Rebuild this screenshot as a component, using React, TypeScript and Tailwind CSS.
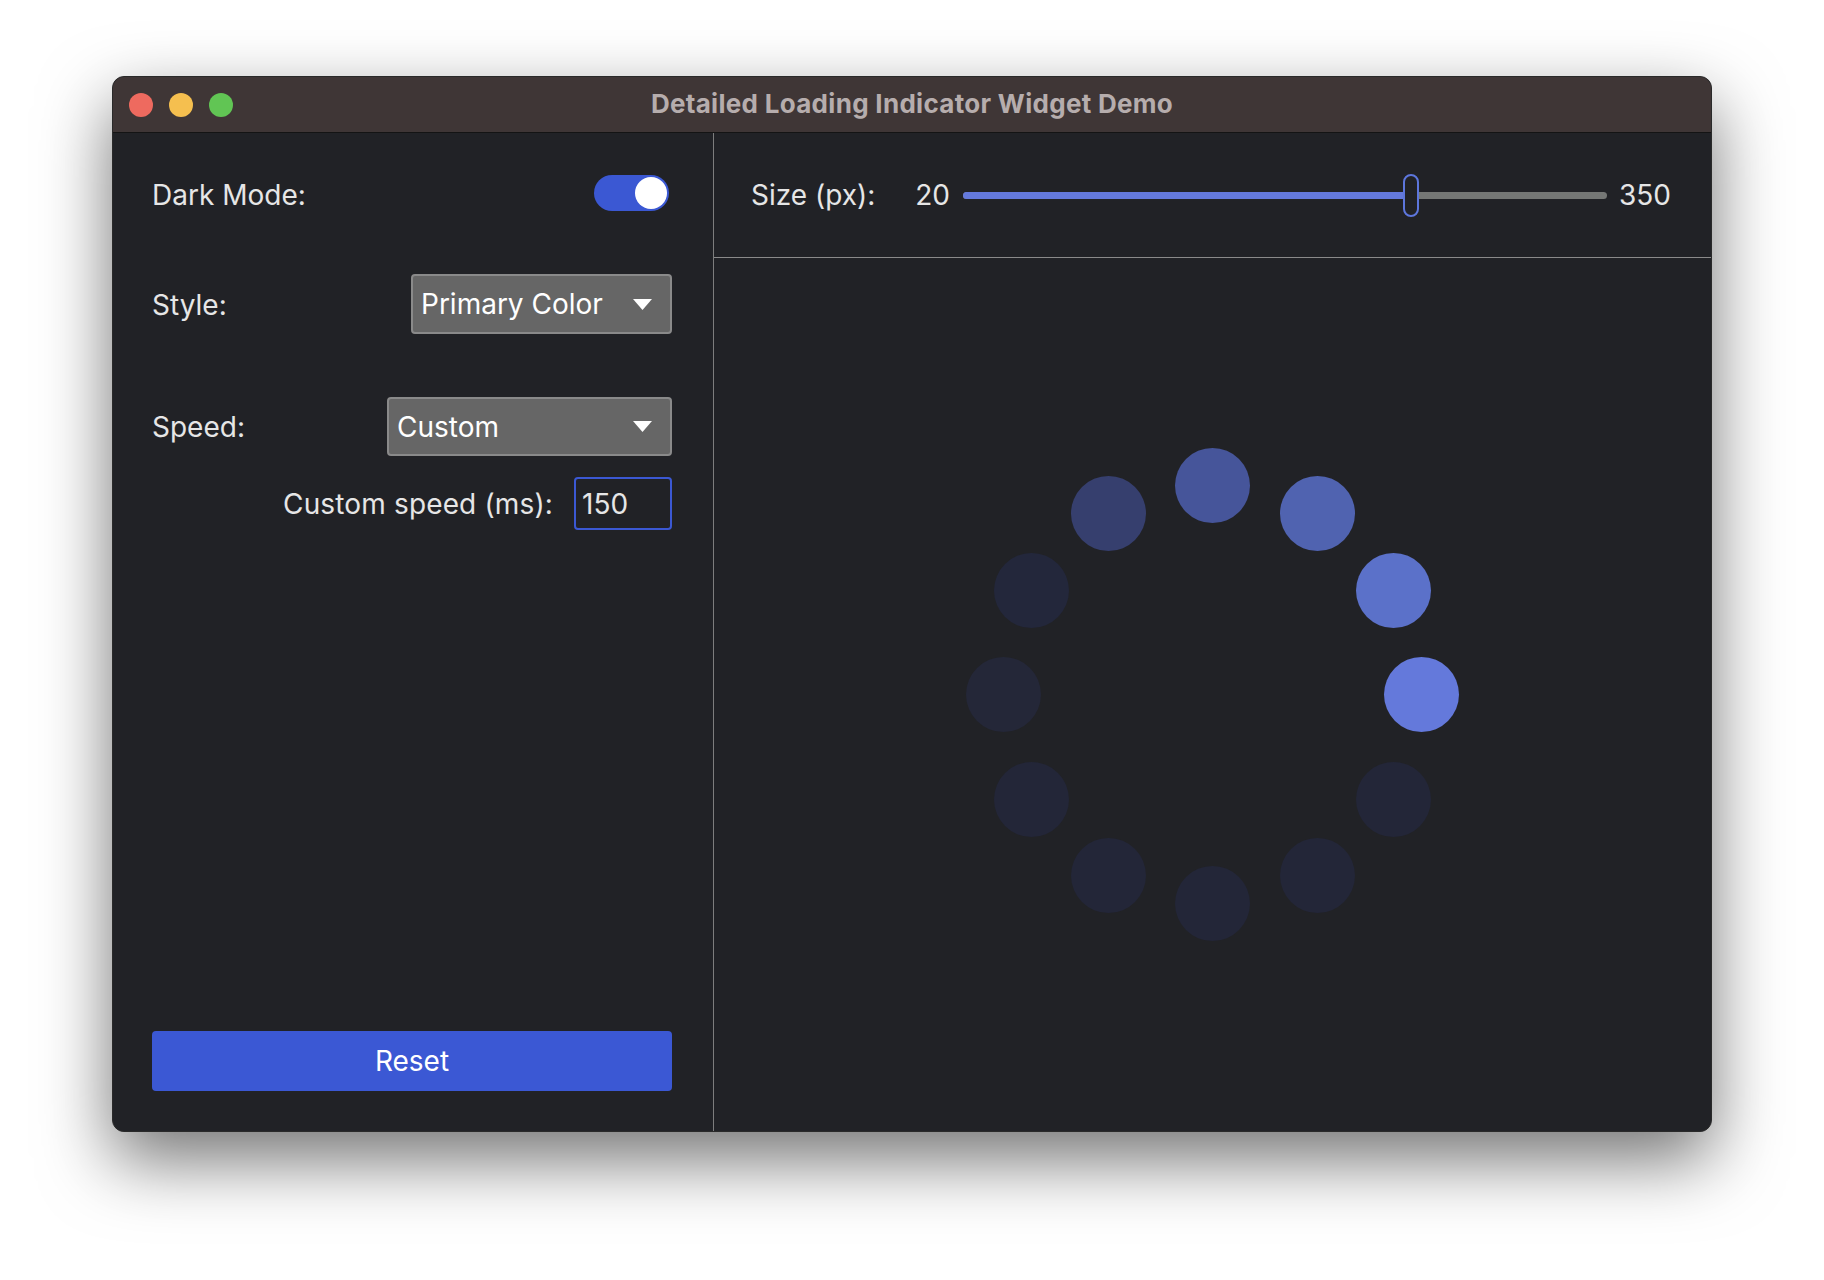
import React from 'react'

const dots = [
  { angle: 0, color: '#46559a' },
  { angle: 30, color: '#5063b0' },
  { angle: 60, color: '#5b71c9' },
  { angle: 90, color: '#6479db' },
  { angle: 120, color: '#232638' },
  { angle: 150, color: '#232638' },
  { angle: 180, color: '#232638' },
  { angle: 210, color: '#232638' },
  { angle: 240, color: '#232638' },
  { angle: 270, color: '#242738' },
  { angle: 300, color: '#23273b' },
  { angle: 330, color: '#363f6e' },
]

const Caret = () => (
  <svg width="19" height="11" viewBox="0 0 19 11" className="shrink-0">
    <polygon points="0,0 19,0 9.5,11" fill="#ffffff" />
  </svg>
)

const Spinner = () => {
  const radius = 209
  const dot = 75
  const box = radius * 2 + dot
  return (
    <div className="relative" style={{ width: box, height: box }}>
      {dots.map((d) => {
        const rad = (d.angle * Math.PI) / 180
        const cx = box / 2 + radius * Math.sin(rad)
        const cy = box / 2 - radius * Math.cos(rad)
        return (
          <div
            key={d.angle}
            className="absolute rounded-full"
            style={{
              width: dot,
              height: dot,
              left: cx - dot / 2,
              top: cy - dot / 2,
              backgroundColor: d.color,
            }}
          />
        )
      })}
    </div>
  )
}

export default function App() {
  return (
    <div
      className="w-[1824px] h-[1280px] bg-white pt-[76px] pl-[112px]"
      style={{ fontFamily: 'Inter, "Noto Sans", sans-serif' }}
    >
      <div className="w-[1600px] h-[1056px] rounded-[12px] border border-[#2a2a2a] bg-[#212226] overflow-hidden flex flex-col shadow-[0_28px_70px_rgba(0,0,0,0.55)]">
        {/* title bar */}
        <div className="relative h-[56px] shrink-0 bg-[#3f3636] border-b border-[#141414] flex items-center justify-center">
          <div className="absolute left-[16px] top-0 h-full flex items-center gap-[16px]">
            <span className="w-[24px] h-[24px] rounded-full bg-[#ee6a5f]" />
            <span className="w-[24px] h-[24px] rounded-full bg-[#f5bf4f]" />
            <span className="w-[24px] h-[24px] rounded-full bg-[#61c554]" />
          </div>
          <span className="text-[26px] font-bold text-[#b6adad] tracking-[0.3px] -mt-[2px]">
            Detailed Loading Indicator Widget Demo
          </span>
        </div>

        <div className="flex flex-1 min-h-0">
          {/* left controls */}
          <div className="w-[601px] shrink-0 border-r border-[#7d7d7d] pl-[39px] pr-[41px] pt-[42px] pb-[40px] flex flex-col text-[28px] text-[#e6e6e6]">
            <div className="h-[36px] flex items-center justify-between">
              <span className="mt-[3px]">Dark Mode:</span>
              <div className="w-[75px] h-[36px] mr-[3px] rounded-full bg-[#3b58d3] flex items-center justify-end pr-[2px]">
                <div className="w-[32px] h-[32px] rounded-full bg-white" />
              </div>
            </div>

            <div className="mt-[63px] h-[60px] flex items-center justify-between">
              <span className="mt-[2px]">Style:</span>
              <div className="w-[261px] h-[60px] rounded-[4px] bg-[#666666] border-2 border-[#8a8a8a] pl-[8px] pr-[18px] flex items-center justify-between text-white">
                <span>Primary Color</span>
                <Caret />
              </div>
            </div>

            <div className="mt-[63px] h-[59px] flex items-center justify-between">
              <span>Speed:</span>
              <div className="w-[285px] h-[59px] rounded-[4px] bg-[#666666] border-2 border-[#8a8a8a] pl-[8px] pr-[18px] flex items-center justify-between text-white">
                <span>Custom</span>
                <Caret />
              </div>
            </div>

            <div className="mt-[21px] h-[53px] flex items-center justify-end gap-[21px]">
              <span className="tracking-[0.15px]">Custom speed (ms):</span>
              <div className="w-[98px] h-[53px] rounded-[4px] border-2 border-[#3b58d3] pl-[6px] flex items-center">
                150
              </div>
            </div>

            <div className="flex-1" />

            <button className="h-[60px] w-full rounded-[4px] bg-[#3b58d4] text-white text-[28px]">
              Reset
            </button>
          </div>

          {/* right preview */}
          <div className="flex-1 flex flex-col min-w-0">
            <div className="h-[125px] shrink-0 border-b border-[#8a8a8a] pl-[37px] pr-[40px] flex items-center text-[28px] text-[#e6e6e6]">
              <span>Size (px):</span>
              <span className="ml-[40px]">20</span>
              <div className="relative flex-1 h-[43px] ml-[13px] mr-[12px]">
                <div className="absolute left-0 right-0 top-[18px] h-[7px] rounded-full bg-[#757775]" />
                <div className="absolute left-0 top-[18px] h-[7px] w-[69.5%] rounded-full bg-[#6479dc]" />
                <div className="absolute left-[68.3%] top-0 w-[16px] h-[43px] rounded-full border-2 border-[#5d76dc] bg-[#212226]" />
              </div>
              <span>350</span>
            </div>
            <div className="flex-1 flex items-center justify-center">
              <Spinner />
            </div>
          </div>
        </div>
      </div>
    </div>
  )
}
